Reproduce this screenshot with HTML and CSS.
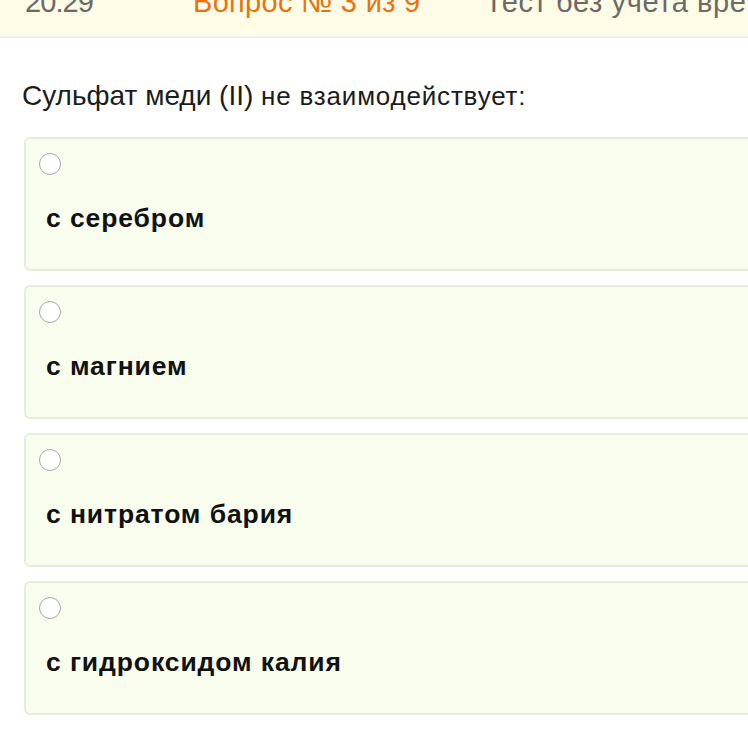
FILE: index.html
```html
<!DOCTYPE html>
<html lang="ru">
<head>
<meta charset="utf-8">
<link rel="stylesheet" href="styles.css">
</head>
<body>
<header class="topbar">
  <div class="topbar-inner">
    <span class="time">20:29</span>
    <span class="qnum">Вопрос № 3 из 9</span>
    <span class="mode">Тест без учета времени</span>
  </div>
</header>
<main class="content">
  <p class="question"><span class="q-main">Сульфат меди (II)</span> <span class="q-rest">не взаимодействует:</span></p>
  <div class="answers">
    <label class="answer">
      <span class="radio"></span>
      <span class="answer-text">с серебром</span>
    </label>
    <label class="answer">
      <span class="radio"></span>
      <span class="answer-text">с магнием</span>
    </label>
    <label class="answer">
      <span class="radio"></span>
      <span class="answer-text">с нитратом бария</span>
    </label>
    <label class="answer">
      <span class="radio"></span>
      <span class="answer-text">с гидроксидом калия</span>
    </label>
  </div>
</main>
</body>
</html>
```
FILE: styles.css
```css
html, body {
  margin: 0;
  padding: 0;
  background: #ffffff;
  overflow: hidden;
  width: 748px;
  height: 750px;
  font-family: "Liberation Sans", Arial, sans-serif;
}
.topbar {
  height: 36px;
  background: #fefbe7;
  border-bottom: 2px solid #f1f0ea;
  overflow: hidden;
}
.topbar-inner {
  display: flex;
  white-space: nowrap;
  margin-top: -12px;
  font-size: 29px;
  line-height: 29px;
}
.topbar-inner span {
  flex-shrink: 0;
}
.time {
  color: #6a6a66;
  margin-left: 25px;
  width: 168px;
  letter-spacing: -0.9px;
}
.qnum {
  color: #e6730f;
  width: 292px;
  letter-spacing: 0.3px;
}
.mode {
  color: #6a6a66;
  letter-spacing: 0.6px;
}
.content {
  padding: 0 0 0 24px;
}
.question {
  margin: 0 0 25px -2px;
  padding-top: 42px;
  height: 32px;
  font-size: 28px;
  line-height: 32px;
  color: #1c1c1c;
  white-space: nowrap;
  overflow: visible;
}
.q-rest {
  font-size: 26px;
  letter-spacing: 0.8px;
}
.answers {
  display: flex;
  flex-direction: column;
  gap: 14px;
}
.answer {
  display: flex;
  flex-direction: column;
  width: 800px;
  height: 130px;
  border: 2px solid #e4eed8;
  border-radius: 6px;
  background: #f8fdee;
}
.radio {
  display: block;
  width: 20px;
  height: 20px;
  margin: 14px 0 0 13px;
  border: 1.5px solid #a8a8a8;
  border-radius: 50%;
  background: #ffffff;
}
.answer-text {
  margin: 28px 0 0 20px;
  font-size: 26.5px;
  line-height: 30px;
  font-weight: bold;
  letter-spacing: 0.9px;
  color: #111111;
}
```
